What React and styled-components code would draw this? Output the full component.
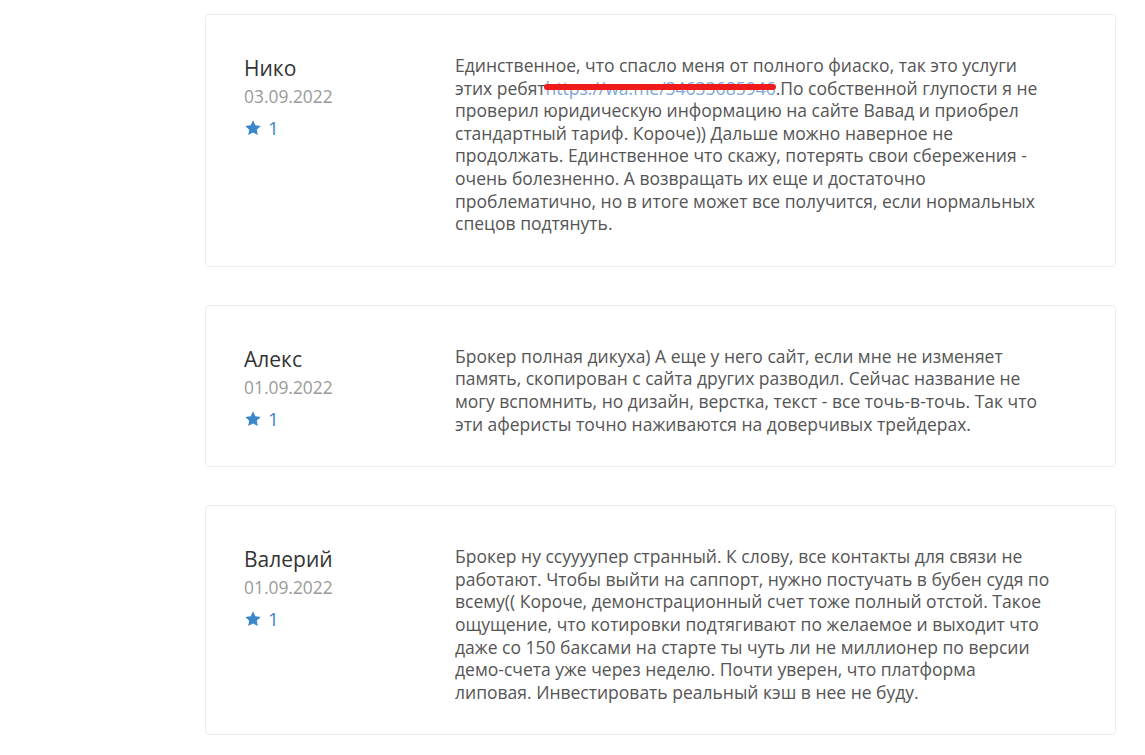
import React from 'react'
import styled, { createGlobalStyle } from 'styled-components'

const Global = createGlobalStyle`
    body {
        margin: 0;
        background: #fff;
        font-family: 'Open Sans', 'Noto Sans', sans-serif;
    }
`

const Page = styled.div`
    padding: 14px 0 20px 205px;
    display: flex;
    flex-direction: column;
    gap: 38px;
`

const Card = styled.div`
    width: 911px;
    box-sizing: border-box;
    border: 1px solid #ececec;
    border-radius: 4px;
    background: #fff;
    display: flex;
    padding: 39px 0 31px 0;
`

const Author = styled.div`
    width: 211px;
    padding-left: 38px;
    flex-shrink: 0;
`

const Name = styled.div`
    font-size: 21px;
    line-height: 28px;
    color: #333;
`

const Date = styled.div`
    font-size: 17.4px;
    line-height: 28px;
    color: #9a9a9a;
`

const Rating = styled.div`
    margin-top: 6px;
    display: flex;
    align-items: center;
    gap: 6px;
    color: #3a87c9;
    font-size: 19px;
    line-height: 24px;
    svg {
        width: 18px;
        height: 18px;
        fill: #3a87c9;
    }
`

const Body = styled.p`
    margin: 0;
    width: 600px;
    font-size: 17.5px;
    line-height: 22.6px;
    color: #555;
`

const Link = styled.span`
    position: relative;
    color: #7ea6d8;
    &::after {
        content: '';
        position: absolute;
        left: -2px;
        right: 0;
        top: 8px;
        height: 6px;
        border-radius: 3px;
        background: #f01a1a;
    }
`

const Star = () => (
    <svg viewBox="0 0 24 24">
        <path d="M12 1.8l3.1 6.6 7.2.9-5.3 5 1.4 7.1L12 17.9l-6.4 3.5L7 14.3l-5.3-5 7.2-.9z" />
    </svg>
)

const reviews = [
    {
        name: 'Нико',
        date: '03.09.2022',
        text: (
            <>
                Единственное, что спасло меня от полного фиаско, так это услуги этих ребят<Link>https://wa.me/34633685946</Link>.По собственной глупости я не проверил юридическую информацию на сайте Вавад и приобрел стандартный тариф. Короче)) Дальше можно наверное не продолжать. Единственное что скажу, потерять свои сбережения - очень болезненно. А возвращать их еще и достаточно проблематично, но в итоге может все получится, если нормальных спецов подтянуть.
            </>
        ),
    },
    {
        name: 'Алекс',
        date: '01.09.2022',
        text: 'Брокер полная дикуха) А еще у него сайт, если мне не изменяет память, скопирован с сайта других разводил. Сейчас название не могу вспомнить, но дизайн, верстка, текст - все точь-в-точь. Так что эти аферисты точно наживаются на доверчивых трейдерах.',
    },
    {
        name: 'Валерий',
        date: '01.09.2022',
        text: 'Брокер ну ссуууупер странный. К слову, все контакты для связи не работают. Чтобы выйти на саппорт, нужно постучать в бубен судя по всему(( Короче, демонстрационный счет тоже полный отстой. Такое ощущение, что котировки подтягивают по желаемое и выходит что даже со 150 баксами на старте ты чуть ли не миллионер по версии демо-счета уже через неделю. Почти уверен, что платформа липовая. Инвестировать реальный кэш в нее не буду.',
    },
]

export default function App() {
    return (
        <Page>
            <Global />
            {reviews.map((r) => (
                <Card key={r.name}>
                    <Author>
                        <Name>{r.name}</Name>
                        <Date>{r.date}</Date>
                        <Rating>
                            <Star />
                            1
                        </Rating>
                    </Author>
                    <Body>{r.text}</Body>
                </Card>
            ))}
        </Page>
    )
}
